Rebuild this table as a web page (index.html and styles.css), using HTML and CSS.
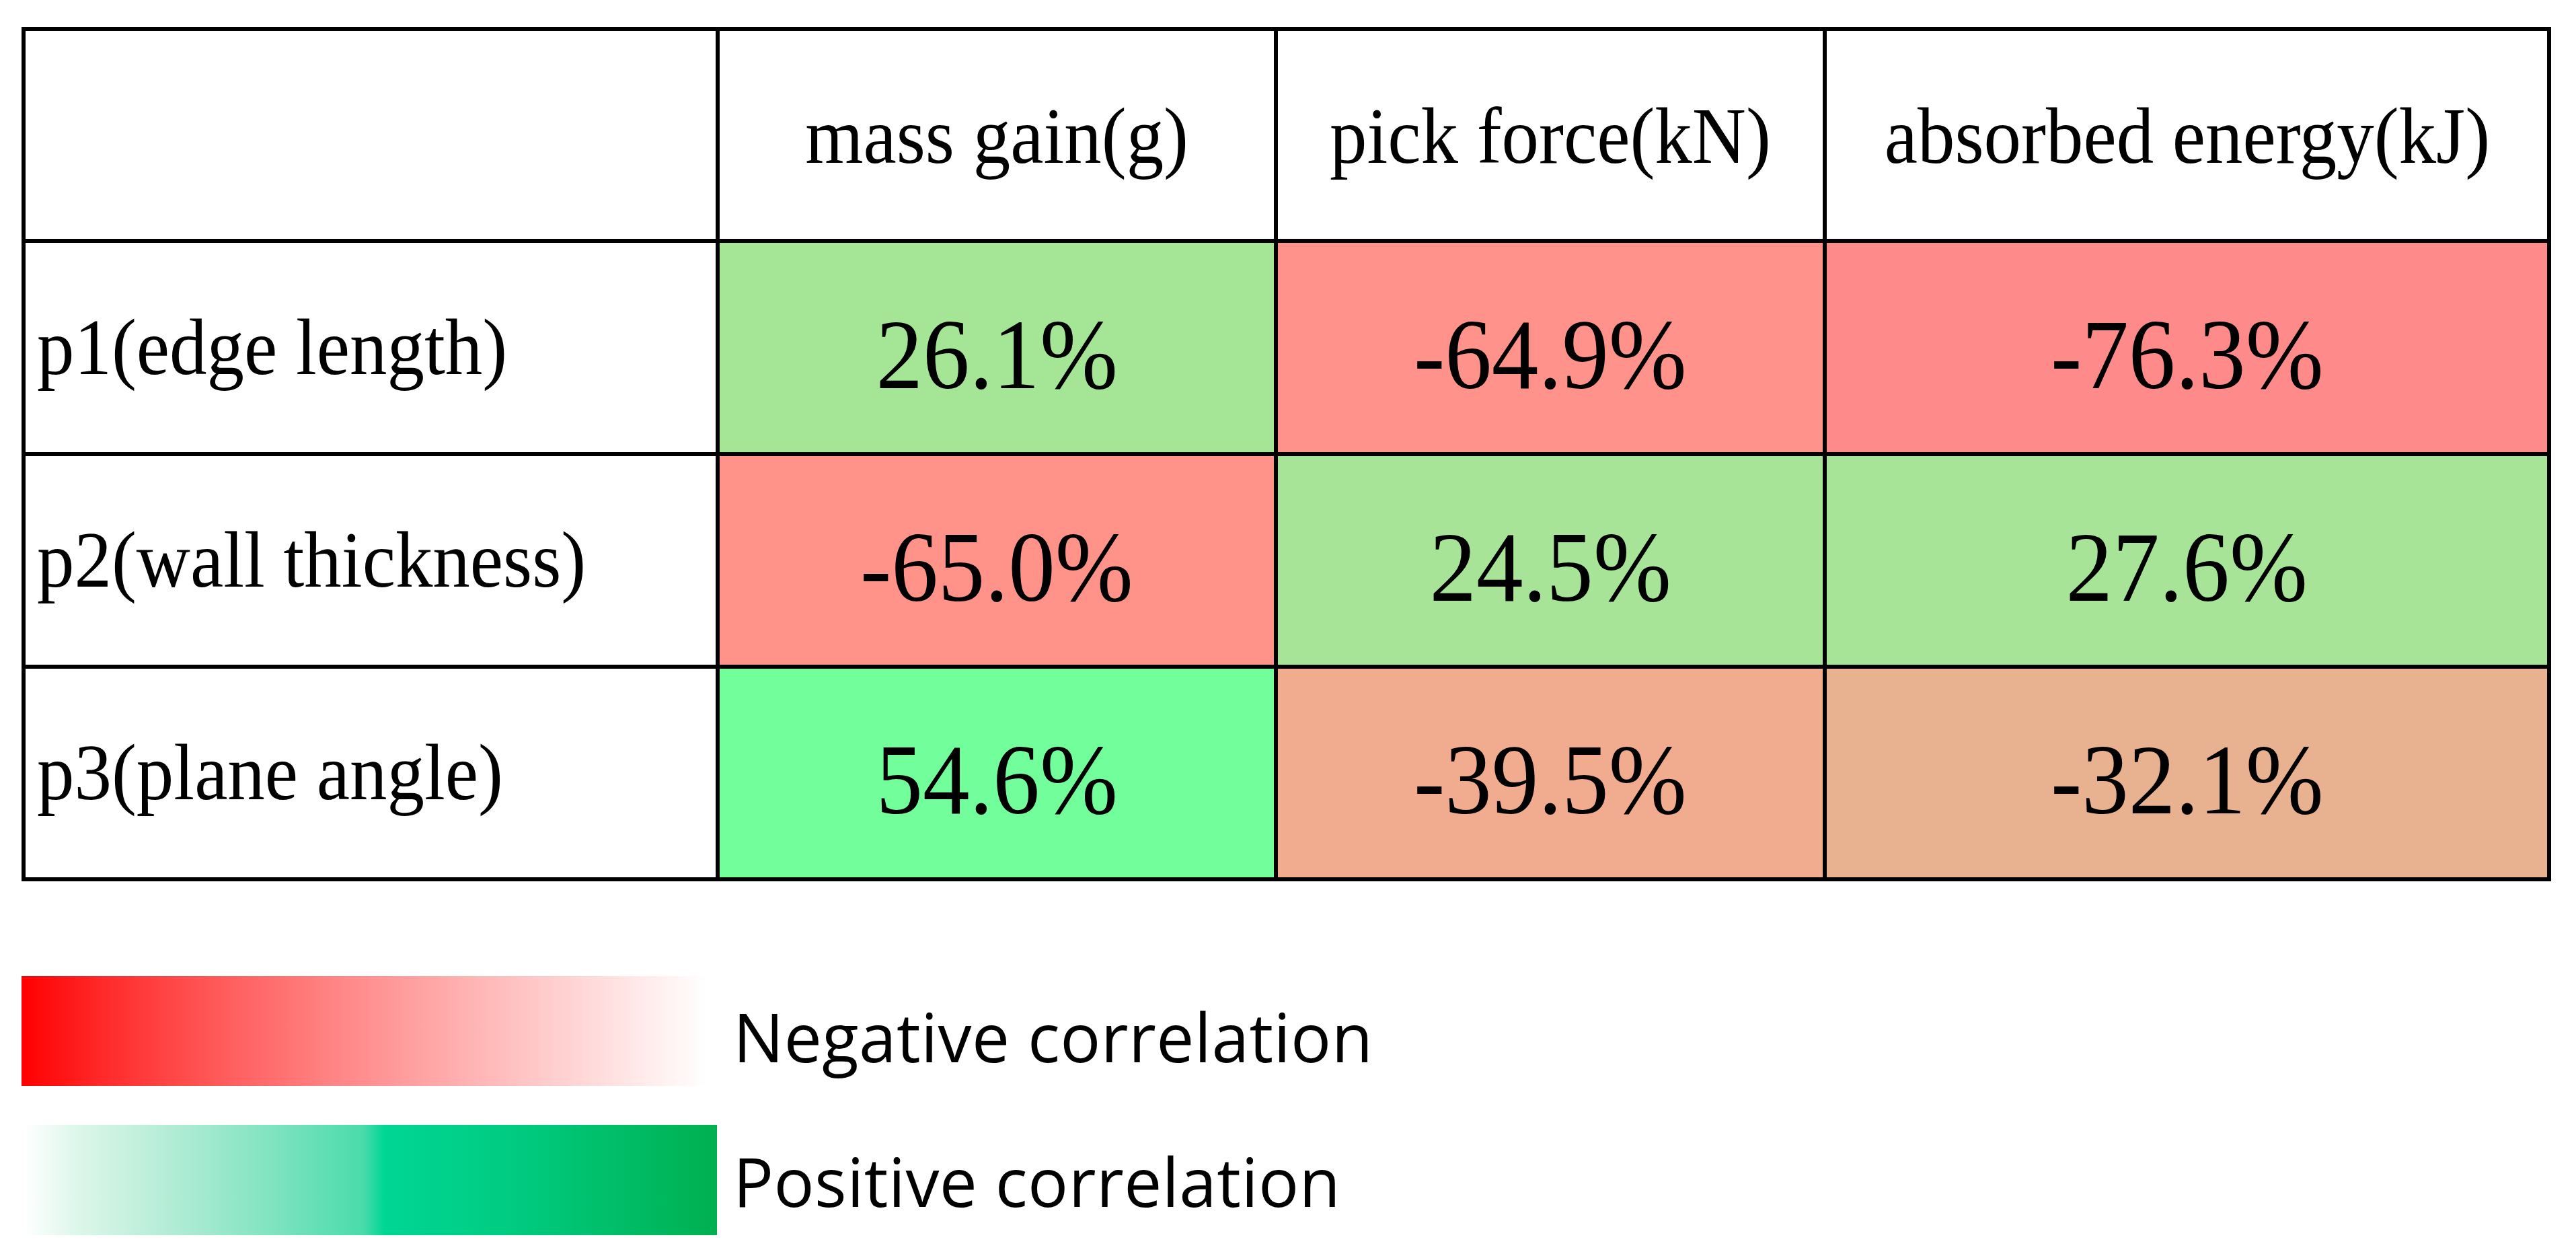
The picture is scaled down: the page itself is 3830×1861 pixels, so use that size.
FILE: index.html
```html
<!DOCTYPE html>
<html lang="en">
<head>
<meta charset="utf-8">
<title>Correlation table</title>
<link rel="stylesheet" href="styles.css">
</head>
<body>
<div class="page">
  <div class="grid">
    <div class="cell head blank"></div>
    <div class="cell head"><span class="sq">mass gain(g)</span></div>
    <div class="cell head"><span class="sq">pick force(kN)</span></div>
    <div class="cell head"><span class="sq">absorbed energy(kJ)</span></div>

    <div class="cell label"><span class="sq sq-left">p1(edge length)</span></div>
    <div class="cell num g1"><span class="sq">26.1%</span></div>
    <div class="cell num r1"><span class="sq">-64.9%</span></div>
    <div class="cell num r2"><span class="sq">-76.3%</span></div>

    <div class="cell label"><span class="sq sq-left">p2(wall thickness)</span></div>
    <div class="cell num r3"><span class="sq">-65.0%</span></div>
    <div class="cell num g2"><span class="sq">24.5%</span></div>
    <div class="cell num g2"><span class="sq">27.6%</span></div>

    <div class="cell label"><span class="sq sq-left">p3(plane angle)</span></div>
    <div class="cell num g3"><span class="sq">54.6%</span></div>
    <div class="cell num o1"><span class="sq">-39.5%</span></div>
    <div class="cell num o2"><span class="sq">-32.1%</span></div>
  </div>

  <div class="legend">
    <div class="legend-row neg">
      <div class="bar bar-neg"></div>
      <div class="legend-text">Negative correlation</div>
    </div>
    <div class="legend-row pos">
      <div class="bar bar-pos"></div>
      <div class="legend-text">Positive correlation</div>
    </div>
  </div>
</div>
</body>
</html>
```
FILE: styles.css
```css
html, body {
  margin: 0;
  padding: 0;
  background: #ffffff;
}

.page {
  padding: 40px 0 0 32px;
}

.grid {
  display: grid;
  grid-template-columns: 1026px 824px 810px 1071px;
  grid-template-rows: 309px 311px 310px 310px;
  gap: 6px;
  padding: 6px;
  background: #000000;
  width: max-content;
  font-family: "Liberation Serif", "Times New Roman", serif;
  color: #000000;
}

.cell {
  background: #ffffff;
  display: flex;
  align-items: center;
  justify-content: center;
  line-height: 1;
  white-space: nowrap;
  overflow: hidden;
}

.sq {
  display: inline-block;
  transform: scaleX(0.94);
  transform-origin: center;
}

.sq-left {
  transform-origin: left center;
}

.head {
  font-size: 118px;
  padding-top: 5px;
  box-sizing: border-box;
}

.label {
  font-size: 118px;
  justify-content: flex-start;
  padding-left: 17px;
}

.num {
  font-size: 148px;
  padding-top: 20px;
  box-sizing: border-box;
}

.g1 { background: #a4e596; }
.g2 { background: #a7e498; }
.g3 { background: #72fe9b; }
.r1 { background: #ff928a; }
.r2 { background: #ff8a8a; }
.r3 { background: #ff938a; }
.o1 { background: #f1ab8f; }
.o2 { background: #e8b190; }

.legend {
  margin-top: 141px;
  display: flex;
  flex-direction: column;
  gap: 58px;
  font-family: "Open Sans", "Noto Sans", sans-serif;
}

.legend-row {
  display: grid;
  grid-template-columns: 1058px auto;
  align-items: start;
}

.bar {
  height: 163px;
}

.bar-neg {
  width: 1021px;
  background: linear-gradient(to right, #ff0000 0%, #ff2a2a 12%, #ff5858 28%, #ff8383 45%, #ffb0b0 64%, #ffd8d8 82%, #ffffff 100%);
}

.bar-pos {
  width: 1031px;
  height: 164px;
  margin-left: 3px;
  background: linear-gradient(to right, #ffffff 0%, #dcf6ea 8%, #b0ecd5 22%, #7fe3c0 36%, #4adbab 49%, #00d694 52%, #00cc82 70%, #00b050 100%);
}

.legend-text {
  font-size: 100px;
  letter-spacing: 0.4px;
  line-height: 1.36;
  color: #000000;
  white-space: nowrap;
}

.neg .legend-text {
  margin-top: 21px;
}

.pos .legend-text {
  margin-top: 15px;
}
```
